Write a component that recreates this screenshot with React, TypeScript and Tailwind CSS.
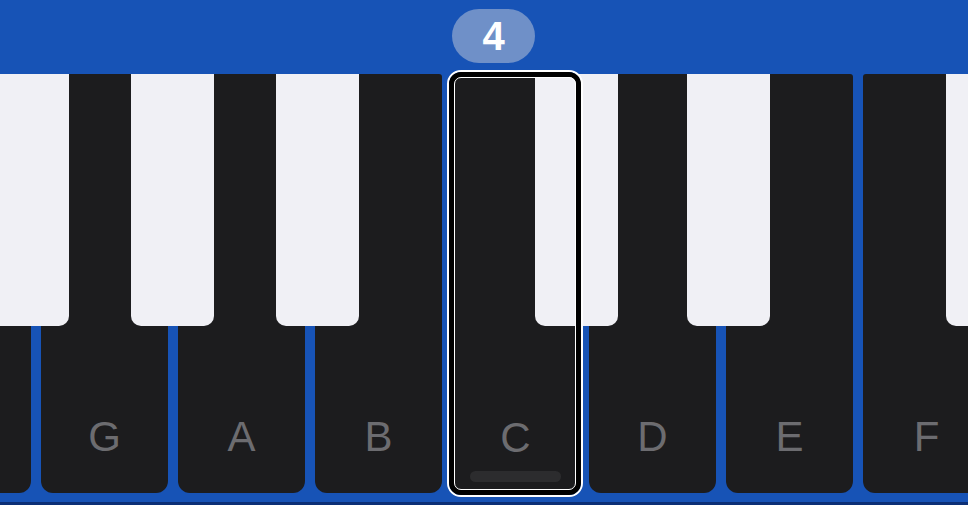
import React from 'react'

const whiteKeys = ['', 'G', 'A', 'B', 'C', 'D', 'E', 'F']
// left offsets of the raised keys inside the key strip
const raisedKeys = [82, 227, 372, 631, 783, 1042]
const SELECTED = 4

function Key({ label, selected }: { label: string; selected: boolean }) {
  return (
    <div className="relative flex h-[419px] w-[127px] shrink-0 flex-col items-center justify-end rounded-t-[3px] rounded-b-[12px] bg-[#1c1c1e]">
      <span
        className={`h-[42px] text-[42px] leading-none text-[#6c6c70] ${selected ? 'mb-[12px]' : 'mb-[35px]'}`}
        style={{ fontFamily: '"Liberation Sans", Arial, sans-serif' }}
      >
        {label}
      </span>
      {selected && <div className="mb-[11px] h-[11px] w-[91px] rounded-full bg-[#2c2c2e]" />}
    </div>
  )
}

export default function App() {
  return (
    <div className="relative h-[505px] w-[968px] overflow-hidden bg-[#1753b6]">
      <div className="flex h-[74px] items-start pl-[452px] pt-[9px]">
        <div
          className="flex h-[54px] w-[83px] items-center justify-center rounded-full bg-[#6f90c8] text-[40px] font-bold leading-none text-white"
          style={{ fontFamily: '"Liberation Sans", Arial, sans-serif' }}
        >
          4
        </div>
      </div>

      <div className="relative ml-[-96px] flex gap-[10px]">
        {whiteKeys.map((k, i) => (
          <Key key={i} label={k} selected={i === SELECTED} />
        ))}

        {raisedKeys.map((left) => (
          <div
            key={left}
            className="absolute top-0 h-[252px] w-[83px] rounded-b-[10px] bg-[#f0f0f5]"
            style={{ left }}
          />
        ))}

        {/* selection ring over the C key */}
        <div className="pointer-events-none absolute left-[543px] top-[-4px] h-[427px] w-[136px] rounded-[14px] border-[2px] border-white">
          <div className="h-full w-full rounded-[12px] border-[5px] border-black">
            <div className="h-full w-full rounded-[7px] border border-white" />
          </div>
        </div>
      </div>

      <div className="absolute bottom-0 left-0 h-[3px] w-full bg-[#0c2f75]" />
    </div>
  )
}
